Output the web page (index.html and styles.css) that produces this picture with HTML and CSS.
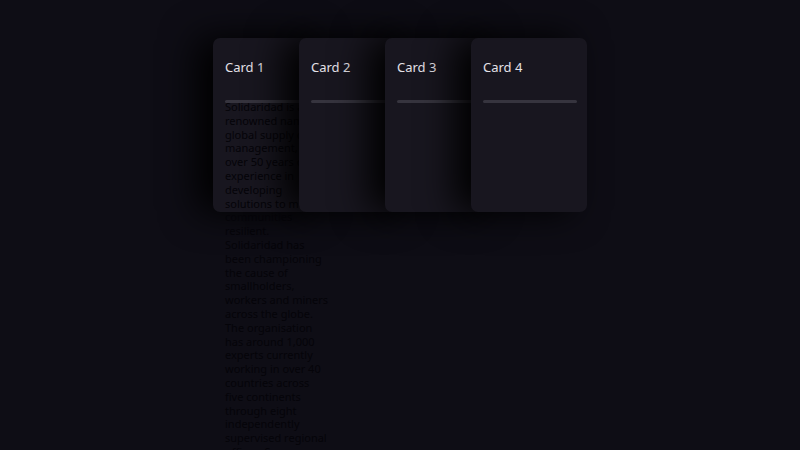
FILE: index.html
```html
<!DOCTYPE html>
<html lang="en">

<head>
    <meta charset="UTF-8">
    <meta name="viewport" content="width=device-width, initial-scale=1.0">
    <title>Cards</title>
    <link rel="stylesheet" href="styles.css">
</head>

<body>
    <div class="stack">
        <div class="card">
            <h3 class="card_title">Card 1</h3>
            <div class="bar"></div>
            <p class="card_text">Solidaridad is a renowned name in global supply chain management, with over 50 years of experience in developing solutions to make communities resilient. Solidaridad has been championing the cause of smallholders, workers and miners across the globe. The organisation has around 1,000 experts currently working in over 40 countries across five continents through eight independently supervised regional offices. Seven</p>
        </div>
        <div class="card">
            <h3 class="card_title">Card 2</h3>
            <div class="bar"></div>
        </div>
        <div class="card">
            <h3 class="card_title">Card 3</h3>
            <div class="bar"></div>
        </div>
        <div class="card">
            <h3 class="card_title">Card 4</h3>
            <div class="bar"></div>
        </div>
    </div>
</body>

</html>
```

FILE: styles.css
```css
body {
    margin: 0;
    background-color: #0e0d15;
    font-family: "Noto Sans", "Open Sans", sans-serif;
    height: 450px;
    overflow: hidden;
}

.stack {
    display: flex;
    justify-content: center;
    padding-top: 38px;
}

.card {
    position: relative;
    z-index: 0;
    width: 92px;
    height: 174px;
    padding: 0 12px;
    flex-shrink: 0;
    background-color: #18161f;
    border-radius: 7px;
    box-shadow: -16px 0 36px #000;
}

.card + .card {
    margin-left: -30px;
}

.card_title {
    margin: 20px 0 0;
    font-size: 13px;
    font-weight: normal;
    line-height: 18px;
    color: #e4e1e8;
}

.bar {
    position: relative;
    z-index: 1;
    height: 3px;
    margin-top: 24px;
    width: 94px;
    background-color: #36343e;
    border-radius: 2px;
}

/* long copy spills out of the first card on purpose */
.card_text {
    margin: -3px 0 0;
    width: 104px;
    font-size: 11px;
    line-height: 13.8px;
    color: #050409;
}
```
